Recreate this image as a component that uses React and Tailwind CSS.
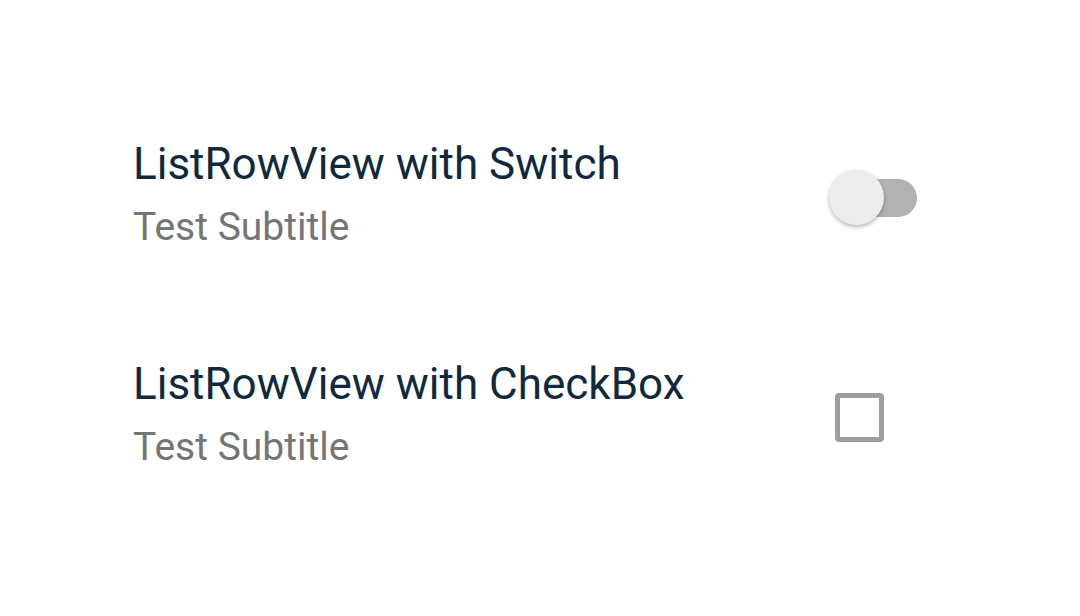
function Switch() {
  return (
    <div className="relative w-[88px] h-[55px] mt-[11px] flex items-center">
      <div className="ml-[8px] w-[80px] h-[38px] rounded-full bg-[#b2b2b2]" />
      <div className="absolute left-0 top-0 w-[55px] h-[55px] rounded-full bg-[#ececec] shadow-[0_2px_4px_rgba(0,0,0,0.28)]" />
    </div>
  )
}

function CheckBox() {
  return <div className="w-[49px] h-[49px] mt-[11px] rounded-[4px] border-[5px] border-[#9e9e9e] bg-white" />
}

function ListRowView({ title, subtitle, pr, children }) {
  return (
    <div className={`flex items-center h-[220px] pl-[133px] ${pr}`}>
      <div className="flex-1 flex flex-col">
        <div className="text-[44px] leading-[52px] text-[#0f2a3f]">{title}</div>
        <div className="mt-[14px] -mb-[3px] text-[39px] leading-[46px] text-[#757575]">{subtitle}</div>
      </div>
      {children}
    </div>
  )
}

export default function App() {
  return (
    <div className="w-[1080px] h-[616px] bg-white pt-[82px] font-['Roboto',sans-serif]">
      <ListRowView title="ListRowView with Switch" subtitle="Test Subtitle" pr="pr-[163px]">
        <Switch />
      </ListRowView>
      <ListRowView title="ListRowView with CheckBox" subtitle="Test Subtitle" pr="pr-[196px]">
        <CheckBox />
      </ListRowView>
    </div>
  )
}
